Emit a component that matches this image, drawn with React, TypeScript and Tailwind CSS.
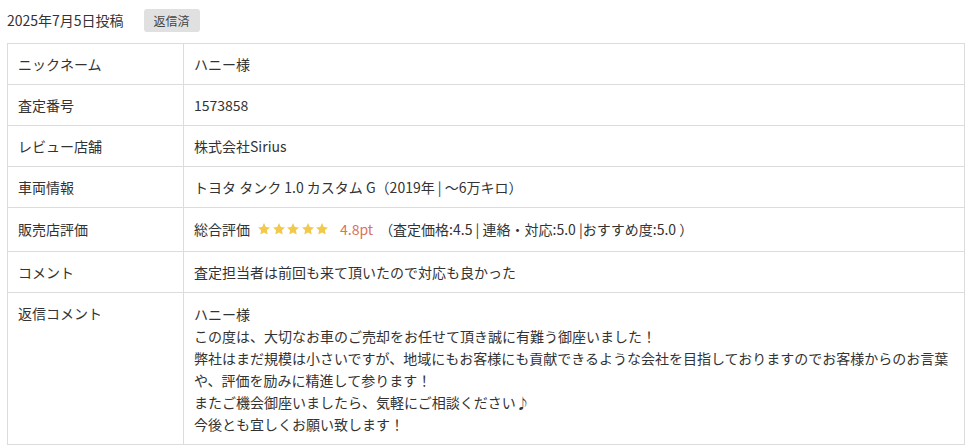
import React from "react";

const rows: { label: string; value: React.ReactNode }[] = [
  { label: "ニックネーム", value: "ハニー様" },
  { label: "査定番号", value: "1573858" },
  { label: "レビュー店舗", value: "株式会社Sirius" },
  { label: "車両情報", value: "トヨタ タンク 1.0 カスタム G（2019年 | ～6万キロ）" },
];

function Star() {
  return (
    <svg viewBox="0 0 24 24" className="h-[14px] w-[14px]" fill="#f2c94c">
      <path d="M12 1.8l3.1 6.6 7.1.9-5.2 4.9 1.3 7.1L12 17.9l-6.3 3.4 1.3-7.1L1.8 9.3l7.1-.9z" />
    </svg>
  );
}

const reply = [
  "ハニー様",
  "この度は、大切なお車のご売却をお任せて頂き誠に有難う御座いました！",
  "弊社はまだ規模は小さいですが、地域にもお客様にも貢献できるような会社を目指しておりますのでお客様からのお言葉",
  "や、評価を励みに精進して参ります！",
  "またご機会御座いましたら、気軽にご相談ください♪",
  "今後とも宜しくお願い致します！",
];

export default function App() {
  return (
    <div
      className="bg-white text-[14px] text-[#333] pl-[7px] pt-[9px]"
      style={{ fontFamily: '"Noto Sans CJK JP", "Noto Sans", sans-serif' }}
    >
      <div className="flex items-center h-[23px]">
        <span>2025年7月5日投稿</span>
        <span className="ml-[20px] h-[23px] w-[56px] flex items-center justify-center rounded-[3px] bg-[#e0e0e0] text-[12px] text-[#444]">
          返信済
        </span>
      </div>

      <table className="mt-[11px] w-[958px] border-collapse leading-[20px]">
        <tbody>
          {rows.map((r) => (
            <tr key={r.label}>
              <td className="w-[176px] border border-[#dcdcdc] px-[10px] py-[10px] align-top">{r.label}</td>
              <td className="border border-[#dcdcdc] px-[10px] py-[10px] align-top">{r.value}</td>
            </tr>
          ))}
          <tr>
            <td className="border border-[#dcdcdc] px-[10px] pt-[11px] pb-[12px] align-top">販売店評価</td>
            <td className="border border-[#dcdcdc] px-[10px] pt-[11px] pb-[12px] align-top">
              <div className="flex items-center h-[20px]">
                <span>総合評価</span>
                <span className="ml-[7px] flex gap-[0.5px]">
                  <Star />
                  <Star />
                  <Star />
                  <Star />
                  <Star />
                </span>
                <span className="ml-[11px] text-[#d9735a]">4.8pt</span>
                <span className="ml-[6px]">（査定価格:4.5 | 連絡・対応:5.0 |おすすめ度:5.0 ）</span>
              </div>
            </td>
          </tr>
          <tr>
            <td className="border border-[#dcdcdc] px-[10px] py-[10px] align-top">コメント</td>
            <td className="border border-[#dcdcdc] px-[10px] py-[10px] align-top">
              査定担当者は前回も来て頂いたので対応も良かった
            </td>
          </tr>
          <tr>
            <td className="border border-[#dcdcdc] px-[10px] py-[10px] align-top">返信コメント</td>
            <td className="border border-[#dcdcdc] px-[10px] pt-[10px] pb-[9px] align-top leading-[22px]">
              {reply.map((l, i) => (
                <div key={i}>{l}</div>
              ))}
            </td>
          </tr>
        </tbody>
      </table>
    </div>
  );
}
